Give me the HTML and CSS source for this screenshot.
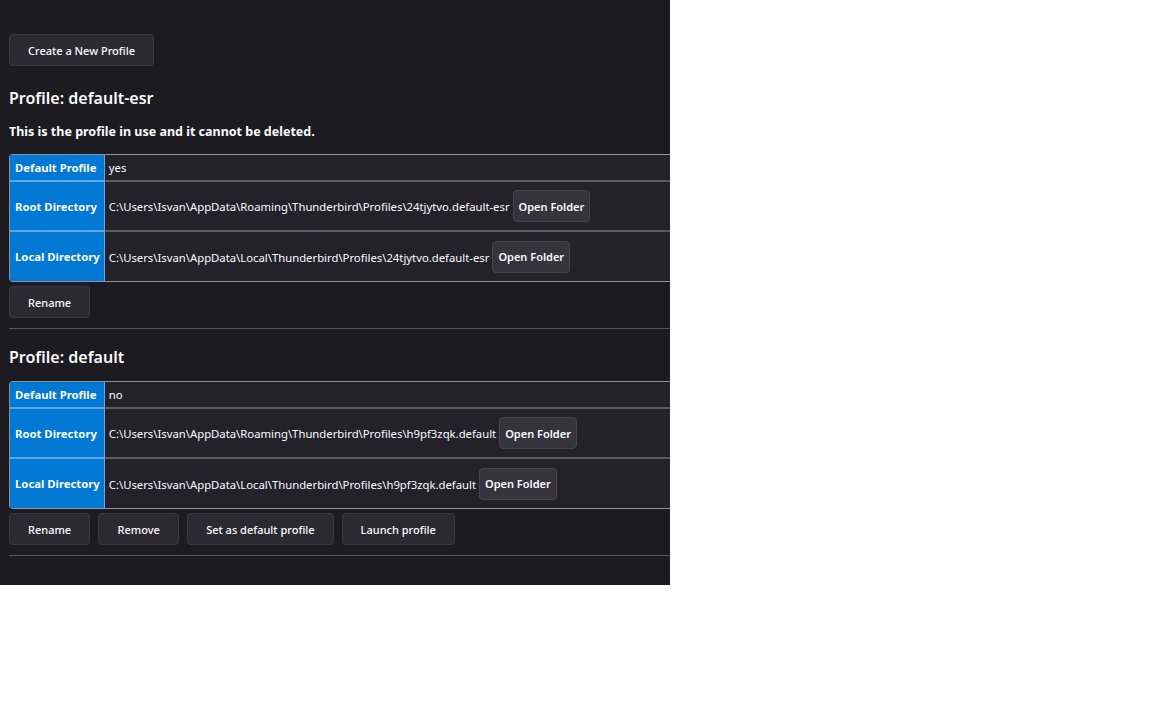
FILE: index.html
```html
<!DOCTYPE html>
<html lang="en">
<head>
  <meta charset="UTF-8" />
  <title>About Profiles</title>
  <link rel="stylesheet" href="styles.css">
</head>
<body>
  <div class="frame">
    <main class="page">
      <button class="btn">Create a New Profile</button>

      <section class="profile">
        <h2>Profile: default-esr</h2>
        <p class="note">This is the profile in use and it cannot be deleted.</p>
        <table class="info">
          <tr class="short">
            <th>Default Profile</th>
            <td>yes</td>
          </tr>
          <tr>
            <th>Root Directory</th>
            <td>C:\Users\Isvan\AppData\Roaming\Thunderbird\Profiles\24tjytvo.default-esr<button class="btn btn-folder">Open Folder</button></td>
          </tr>
          <tr>
            <th>Local Directory</th>
            <td>C:\Users\Isvan\AppData\Local\Thunderbird\Profiles\24tjytvo.default-esr<button class="btn btn-folder">Open Folder</button></td>
          </tr>
        </table>
        <div class="actions">
          <button class="btn">Rename</button>
        </div>
      </section>

      <section class="profile">
        <h2>Profile: default</h2>
        <table class="info">
          <tr class="short">
            <th>Default Profile</th>
            <td>no</td>
          </tr>
          <tr>
            <th>Root Directory</th>
            <td>C:\Users\Isvan\AppData\Roaming\Thunderbird\Profiles\h9pf3zqk.default<button class="btn btn-folder">Open Folder</button></td>
          </tr>
          <tr>
            <th>Local Directory</th>
            <td>C:\Users\Isvan\AppData\Local\Thunderbird\Profiles\h9pf3zqk.default<button class="btn btn-folder">Open Folder</button></td>
          </tr>
        </table>
        <div class="actions">
          <button class="btn">Rename</button>
          <button class="btn">Remove</button>
          <button class="btn">Set as default profile</button>
          <button class="btn">Launch profile</button>
        </div>
      </section>
    </main>
  </div>
</body>
</html>
```

FILE: styles.css
```css
body {
  margin: 0;
  background: #fff;
  font-family: 'Noto Sans', 'Open Sans', sans-serif;
  color: #fbfbfe;
}

.frame {
  width: 670px;
  height: 585px;
  overflow: hidden;
  background: #1c1b21;
}

.page {
  width: 900px;
  padding: 34px 9px 0;
}

.btn {
  font-family: inherit;
  font-size: 11px;
  font-weight: 500;
  color: #fbfbfe;
  background: #2b2a33;
  border: 1px solid #3a3942;
  border-radius: 4px;
  height: 32px;
  padding: 0 18px;
  margin: 0;
  cursor: pointer;
}

.profile {
  border-bottom: 1px solid #55545c;
  padding-bottom: 10px;
}

h2 {
  font-size: 16px;
  font-weight: 600;
  line-height: 24px;
  margin: 20px 0 13px;
}

.profile + .profile h2 {
  margin: 16px 0 12px;
}

.note {
  font-size: 12.5px;
  font-weight: 700;
  line-height: 18px;
  margin: 0 0 13px;
}

.info {
  width: 100%;
  border-spacing: 0;
  border: 1px solid #8f8f9d;
  border-right: none;
  border-radius: 4px 0 0 4px;
  font-size: 11.3px;
}

.info th {
  background: #0078d4;
  border-right: 1px solid #5fa8e8;
  border-bottom: 2px solid #5fa8e8;
  text-align: left;
  font-weight: 700;
  padding: 0 4px 0 5px;
  width: 1px;
  white-space: nowrap;
}

.info td {
  background: #23222b;
  border-bottom: 2px solid #5b5b66;
  padding: 0 4px;
  white-space: nowrap;
  height: 48px;
}

.info tr.short td,
.info tr.short th {
  height: 25px;
}

.info tr:last-child td,
.info tr:last-child th {
  border-bottom: none;
  height: 49px;
}

.btn-folder {
  background: #35343d;
  border-color: #46454d;
  padding: 0 5px;
  margin-left: 3px;
  font-size: 11px;
  font-weight: 600;
}

.actions {
  display: flex;
  gap: 8px;
  margin-top: 4px;
}

.actions .btn {
  min-width: 81px;
}
```
